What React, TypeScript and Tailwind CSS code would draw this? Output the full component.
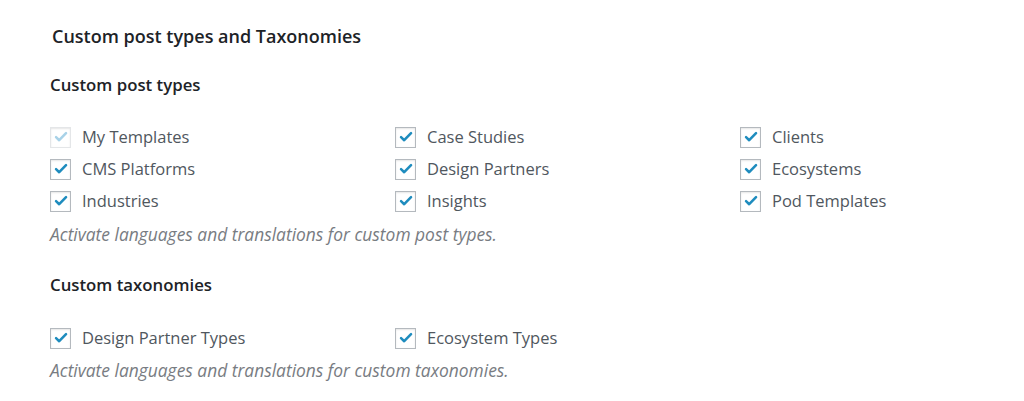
import React from 'react';

const Check: React.FC<{ disabled?: boolean }> = ({ disabled }) => (
  <span
    className={`flex h-[21px] w-[21px] shrink-0 items-center justify-center border bg-white shadow-[inset_0_1px_2px_rgba(0,0,0,0.1)] ${
      disabled ? 'border-[#e4e6e8]' : 'border-[#b4b9be]'
    }`}
  >
    <svg viewBox="0 0 20 20" className="h-[18px] w-[18px]">
      <path
        d="M4.5 10.2 L8 13.6 L15.6 5.6"
        fill="none"
        stroke={disabled ? '#a8d2e8' : '#1e8cbe'}
        strokeWidth={2.8}
        strokeLinecap="round"
        strokeLinejoin="round"
      />
    </svg>
  </span>
);

const Item: React.FC<{ label: string; disabled?: boolean }> = ({ label, disabled }) => (
  <label className="flex h-[32px] items-center gap-[11px]">
    <Check disabled={disabled} />
    <span className="text-[16.5px] text-[#50575e]">{label}</span>
  </label>
);

const postTypes = [
  { label: 'My Templates', disabled: true },
  { label: 'Case Studies' },
  { label: 'Clients' },
  { label: 'CMS Platforms' },
  { label: 'Design Partners' },
  { label: 'Ecosystems' },
  { label: 'Industries' },
  { label: 'Insights' },
  { label: 'Pod Templates' },
];

const taxonomies = [{ label: 'Design Partner Types' }, { label: 'Ecosystem Types' }];

export default function App() {
  return (
    <div className="h-[401px] w-[1024px] overflow-hidden bg-white font-['Open_Sans',sans-serif]">
      <div className="pl-[50px] pt-[23px]">
        <h2 className="pl-[2px] text-[18px] font-semibold text-[#1d2327]">Custom post types and Taxonomies</h2>

        <h3 className="mt-[22px] text-[16.8px] font-semibold text-[#1d2327]">Custom post types</h3>
        <div className="mt-[24px] grid grid-cols-[345px_345px_1fr]">
          {postTypes.map((p) => (
            <Item key={p.label} label={p.label} disabled={p.disabled} />
          ))}
        </div>
        <p className="mt-[4px] text-[17.4px] italic text-[#787c82]">Activate languages and translations for custom post types.</p>

        <h3 className="mt-[25px] text-[16.8px] font-semibold text-[#1d2327]">Custom taxonomies</h3>
        <div className="mt-[25px] grid grid-cols-[345px_345px_1fr]">
          {taxonomies.map((p) => (
            <Item key={p.label} label={p.label} />
          ))}
        </div>
        <p className="mt-[3px] text-[17.4px] italic text-[#787c82]">Activate languages and translations for custom taxonomies.</p>
      </div>
    </div>
  );
}
